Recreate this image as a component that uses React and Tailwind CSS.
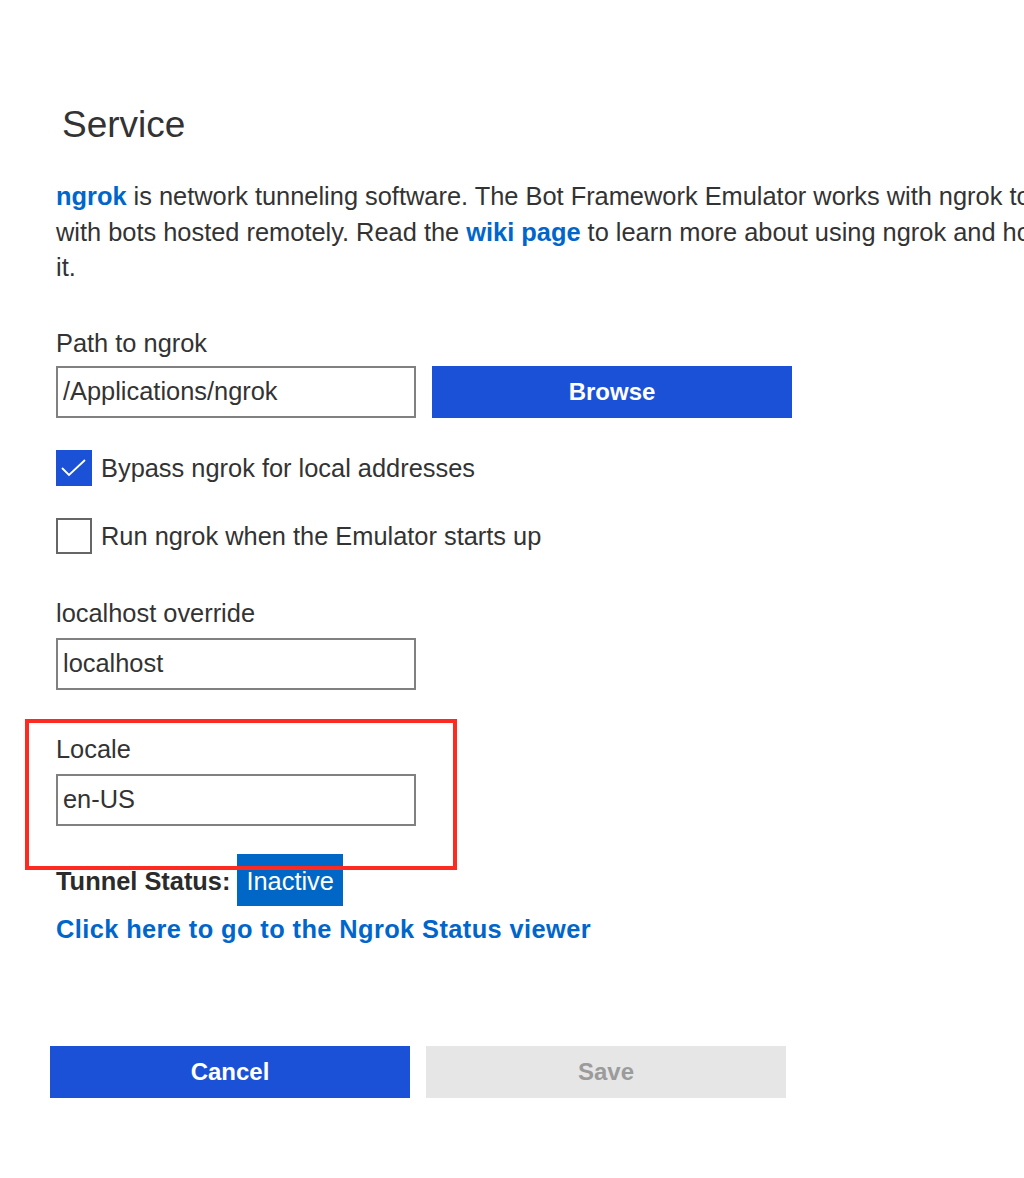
import React from "react";

const font = { fontFamily: '"Liberation Sans", Arial, sans-serif' };

function Field({ label, value }) {
  return (
    <div>
      <div className="text-[25.4px] leading-[30px] text-[#333333]">{label}</div>
      <input
        readOnly
        value={value}
        className="mt-[10px] block h-[52px] w-[360px] border-2 border-[#808080] bg-white pl-[5px] text-[25.4px] text-[#333333] outline-none"
        style={font}
      />
    </div>
  );
}

function Check({ checked, label, className = "" }) {
  return (
    <div className={"flex items-center gap-[9px] " + className}>
      {checked ? (
        <div className="h-[36px] w-[36px] bg-[#1b51d6]">
          <svg width="36" height="36" viewBox="0 0 36 36" fill="none">
            <path d="M6 18 L13 25 L29 10" stroke="white" strokeWidth="1.8" />
          </svg>
        </div>
      ) : (
        <div className="h-[36px] w-[36px] border-2 border-[#666666] bg-white" />
      )}
      <span className="text-[25.4px] leading-[36px] text-[#333333]">{label}</span>
    </div>
  );
}

export default function App() {
  return (
    <div className="h-[1178px] w-[1024px] overflow-hidden bg-white" style={font}>
      <div className="pl-[56px] pt-[103px]">
        <h1 className="ml-[6px] text-[37px] font-light leading-[44px] text-[#333333]">Service</h1>

        <p className="mt-[32px] whitespace-nowrap text-[25.4px] leading-[35.5px] text-[#333333]">
          <span className="font-bold text-[#0066cc]">ngrok</span> is network tunneling software. The Bot
          Framework Emulator works with ngrok to communicate
          <br />
          with bots hosted remotely. Read the <span className="font-bold text-[#0066cc]">wiki page</span> to
          learn more about using ngrok and how to download
          <br />
          it.
        </p>

        <div className="mt-[42px] text-[25.4px] leading-[30px] text-[#333333]">Path to ngrok</div>
        <div className="mt-[8px] flex">
          <input
            readOnly
            value="/Applications/ngrok"
            className="block h-[52px] w-[360px] border-2 border-[#808080] bg-white pl-[5px] text-[25.4px] text-[#333333] outline-none"
            style={font}
          />
          <button
            className="ml-[16px] h-[52px] w-[360px] bg-[#1b51d6] text-[24px] font-bold text-white"
            style={font}
          >
            Browse
          </button>
        </div>

        <Check checked label="Bypass ngrok for local addresses" className="mt-[32px]" />
        <Check label="Run ngrok when the Emulator starts up" className="mt-[32px]" />

        <div className="mt-[44px]">
          <Field label="localhost override" value="localhost" />
        </div>

        <div className="relative mt-[44px]">
          <Field label="Locale" value="en-US" />
          <div className="pointer-events-none absolute left-[-31px] top-[-15px] z-10 h-[151px] w-[432px] border-4 border-[#fc2a20]" />
        </div>

        <div className="mt-[28px] flex items-center">
          <span className="pt-[3px] text-[25.4px] font-bold text-[#2b2b2b]">Tunnel Status:</span>
          <span className="ml-[7px] flex h-[52px] items-center bg-[#0067c7] px-[9px] pt-[3px] text-[25.4px] text-white">
            Inactive
          </span>
        </div>

        <div className="mt-[8px] text-[25.4px] font-bold leading-[30px] tracking-[0.4px] text-[#0066cc]">
          Click here to go to the Ngrok Status viewer
        </div>
      </div>

      <div className="mt-[102px] flex gap-[16px] pl-[50px]">
        <button className="h-[52px] w-[360px] bg-[#1b51d6] text-[24px] font-bold text-white" style={font}>
          Cancel
        </button>
        <button className="h-[52px] w-[360px] bg-[#e6e6e6] text-[24px] font-bold text-[#9b9b9b]" style={font}>
          Save
        </button>
      </div>
    </div>
  );
}
